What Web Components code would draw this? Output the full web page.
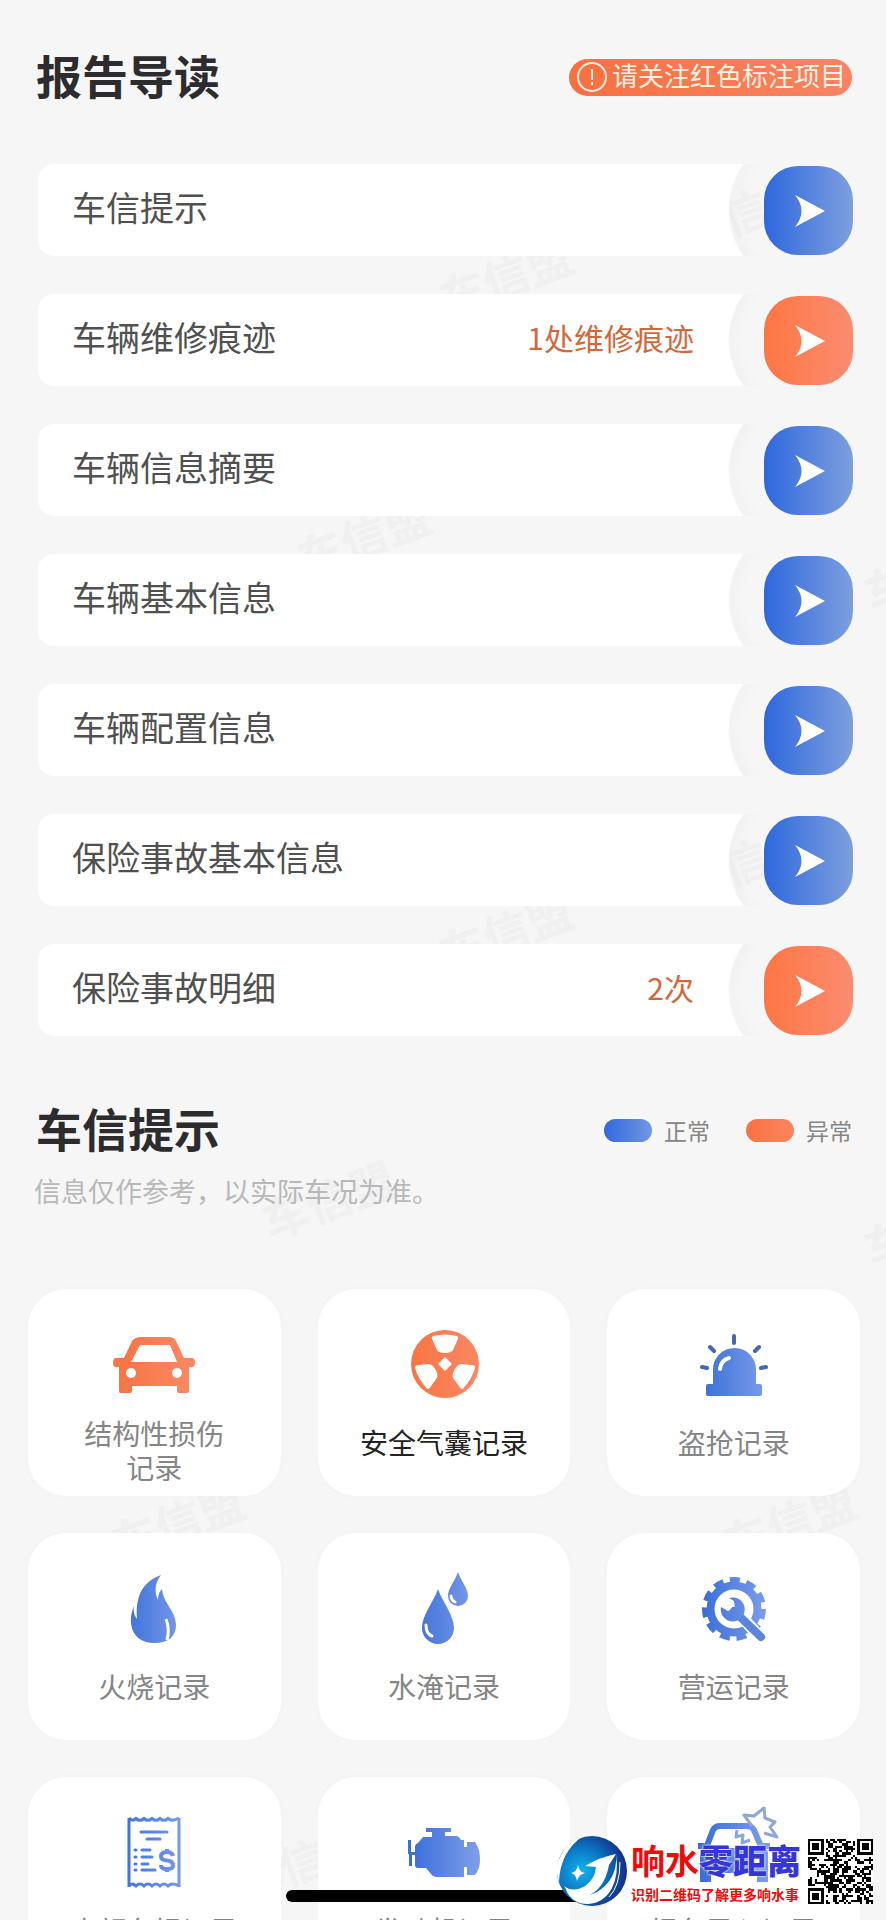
<!DOCTYPE html>
<html lang="zh-CN">
<head>
<meta charset="utf-8">
<meta name="viewport" content="width=device-width, initial-scale=1">
<title>报告导读</title>
<style>
  body {
    margin: 0;
    background: #f6f6f7;
    font-family: "Noto Sans CJK SC", sans-serif;
    color: #444;
  }
</style>
</head>
<body>
<report-page>
  <section-head>
    报告导读
    <notice-badge slot="side">请关注红色标注项目</notice-badge>
  </section-head>

  <guide-list>
    <guide-row>车信提示</guide-row>
    <guide-row alert note="1处维修痕迹">车辆维修痕迹</guide-row>
    <guide-row>车辆信息摘要</guide-row>
    <guide-row>车辆基本信息</guide-row>
    <guide-row>车辆配置信息</guide-row>
    <guide-row>保险事故基本信息</guide-row>
    <guide-row alert note="2次">保险事故明细</guide-row>
  </guide-list>

  <section-head class="second">
    车信提示
    <status-legend slot="side"></status-legend>
    <span slot="hint">信息仅作参考，以实际车况为准。</span>
  </section-head>

  <record-grid>
    <record-card icon="car" alert two-line>结构性损伤<br>记录</record-card>
    <record-card icon="airbag" alert current>安全气囊记录</record-card>
    <record-card icon="siren">盗抢记录</record-card>
    <record-card icon="fire">火烧记录</record-card>
    <record-card icon="water">水淹记录</record-card>
    <record-card icon="gear">营运记录</record-card>
    <record-card icon="bill">大额车损记录</record-card>
    <record-card icon="engine">发动机记录</record-card>
    <record-card icon="crash">报备录入记录</record-card>
  </record-grid>

  <home-bar slot="overlay"></home-bar>
  <promo-stamp slot="overlay"></promo-stamp>
</report-page>

<script>
const define = (name, html, setup) => {
  const tpl = document.createElement('template');
  tpl.innerHTML = html;
  customElements.define(name, class extends HTMLElement {
    constructor() {
      super();
      this.attachShadow({ mode: 'open' }).appendChild(tpl.content.cloneNode(true));
      this.$ = sel => this.shadowRoot.querySelector(sel);
    }
    connectedCallback() {
      if (setup) setup(this);
    }
  });
};

// icons share an 84x76 box, "url(#g)" is the card's own gradient
const ICONS = {
  car: `
    <path fill-rule="evenodd" d="M29 10H57Q62 10 64 14L72 31H80Q83 31 83 35.500T80 40H77V64Q77 66 75 66H67Q65 66 65 64V59H20V64Q20 66 18 66H9Q7 66 7 64V40H4Q1 40 1 35.500T4 31H12L20 14Q23 10 29 10ZM28 18L19 35H65L58 18Z"/>
    <circle cx="19" cy="46" r="5" fill="#fff"/><circle cx="65" cy="46" r="5" fill="#fff"/>`,
  airbag: `
    <circle cx="43" cy="37" r="34"/>
    <g fill="#fff" transform="translate(43 37)">
      <path id="b" d="M-12 -28Q0 -31 12 -28Q14 -27 13 -25L8 -14Q6 -11 0 -11T-8 -14L-13 -25Q-14 -27 -12 -28Z"/>
      <use href="#b" transform="rotate(120)"/><use href="#b" transform="rotate(240)"/>
      <path d="M0 -7L7 0L0 7L-7 0Z"/>
    </g>`,
  siren: `
    <path d="M21 57V42A21.500 21 0 0 1 64 42V57H68Q70 57 70 59V67Q70 69 68 69H16Q14 69 14 67V59Q14 57 16 57Z"/>
    <path d="M28 42Q29 33 37 31" fill="none" stroke="#fff" stroke-width="4" stroke-linecap="round"/>
    <path d="M42 9V16M18 20L22 24M67 20L63 24M10 40L15 41M74 40L69 41" fill="none" stroke="#4468b8" stroke-width="4" stroke-linecap="round"/>`,
  fire: `
    <path d="M49 4C33 10 23 22 25 48C22 44 21 40 22 35C15 50 19 72 42 72C57 72 64 65 64 54C64 40 51 32 50 18C47 21 46 24 46 29C42 20 43 12 49 4Z"/>
    <path d="M54 48Q58 58 55 69" fill="none" stroke="#fff" stroke-width="3"/>`,
  water: `
    <path d="M36 18C31 32 20 44 20 57A16 16 0 0 0 52 57C52 44 41 32 36 18Z"/>
    <path d="M56 1C53 10 46 17 46 25A10 10 0 0 0 66 25C66 17 59 10 56 1Z"/>
    <path d="M24 54Q24 63 30 65M49 25Q49 29 53 31" fill="none" stroke="#fff" stroke-width="3" stroke-linecap="round"/>`,
  gear: `
    <g fill="none" stroke="url(#g)">
      <circle cx="42" cy="38" r="23.500" stroke-width="8"/>
      <circle cx="42" cy="38" r="28" stroke-width="8" pathLength="110" stroke-dasharray="6 4"/>
    </g>
    <path d="M46 42L68 66" stroke="#fff" stroke-width="12"/>
    <path d="M42 40L69 66" stroke="#5b85dd" stroke-width="8" stroke-linecap="round"/>
    <path d="M37 27A12 12 0 1 1 29 36L36 40L43 37L42 30Z"/>`,
  bill: `
    <g fill="none" stroke="url(#g)" stroke-width="3">
      <path d="M17 3V72M67 3V72"/>
      <path d="M17 3Q20 7 24 3.500Q28 7 32 3.500Q36 7 40 3.500Q44 7 48 3.500Q52 7 56 3.500Q60 7 67 3M17 71Q20 67 24 71Q28 67 32 71Q36 67 40 71Q44 67 48 71Q52 67 56 71Q60 67 67 71"/>
      <path stroke-linecap="round" d="M29 17H55M35 24H48M23 35h1M30 35H38M23 42h1M30 42H40M23 49h1M30 49H36M23 55h1M30 55H43"/>
      <path stroke-width="4" d="M61 41Q60 37 55 37Q49 37 49 41.500Q49 45 55 45.500Q61 46 61 50.500Q61 54 55 54Q49 54 49 50M55 34V38M55 53V57"/>
    </g>`,
  engine: `
    <path d="M24 13H49V17H43V21H54Q57 21 59 25H62V32H65V27H73Q78 34 78 44T73 60H65V52H62V62H34Q31 62 29 59L24 53H16Q13 53 13 50V40H10V51H7V39H6V25H9V37H13V32Q13 29 16 28L21 22H30V17H24Z"/>`,
  crash: `
    <g fill="none" stroke="url(#g)" stroke-width="6" stroke-linejoin="round">
      <path d="M13 36L21 15Q23 11 28 11H55Q60 11 62 15L71 36M6 31H13M71 31H78"/>
      <path stroke-width="3" stroke="#8ea6d8" d="M60 11L52 0L62 1L72 -7L73 3L83 7L78 12L85 22L72 18M45 15L44 22L51 20L50 28L58 25"/>
    </g>
    <path d="M8 37Q10 33 15 33H69Q74 33 76 37V67H65V58H19V67H8Z"/>
    <circle cx="20" cy="45" r="4" fill="#fff"/><circle cx="64" cy="45" r="4" fill="#fff"/>`
};

define('report-page', `
  <style>
    :host {
      display: block;
      position: relative;
      z-index: 0;
      height: 100vh;
      overflow: hidden;
      box-sizing: border-box;
      padding-top: 49px;
    }
    .mark {
      position: absolute;
      z-index: -1;
      transform: translate(-50%, -50%) rotate(-20deg);
      font-size: 46px;
      font-weight: 700;
      line-height: 46px;
      white-space: nowrap;
      color: #f0f0f1;
    }
  </style>
  <div id="marks" aria-hidden="true"></div>
  <slot></slot>
  <slot name="overlay"></slot>
`, el => {
  // watermark pins: percent across, px down
  const pins = [[84, 210], [57, 275], [41, 535], [105, 570], [84, 860], [57, 930],
    [37, 1198], [105, 1225], [20, 1520], [89, 1520], [34, 1860]];
  el.$('#marks').innerHTML = pins
    .map(([x, y]) => `<span class="mark" style="left:${x}%;top:${y}px">车信盟</span>`).join('');
});

define('section-head', `
  <style>
    :host {
      display: block;
      padding: 0 34px 0 36px;
    }
    :host(.second) {
      padding-top: 66px;
    }
    .line {
      display: flex;
      align-items: center;
      justify-content: space-between;
    }
    h2 {
      margin: 0;
      padding-bottom: 6px;
      font-size: 46px;
      line-height: 50px;
      font-weight: 700;
      color: #2c2c2e;
    }
    ::slotted([slot=hint]) {
      display: block;
      margin: 15px 0 0 -2px;
      font-size: 27px;
      line-height: 36px;
      color: #b8b8b9;
    }
  </style>
  <div class="line">
    <h2><slot></slot></h2>
    <slot name="side"></slot>
  </div>
  <slot name="hint"></slot>
`);

define('notice-badge', `
  <style>
    :host {
      display: flex;
      align-items: center;
      gap: 5px;
      height: 37px;
      padding: 0 6px 0 8px;
      border-radius: 19px;
      background: linear-gradient(90deg, #f9703f, #f98463);
      color: #fff2e4;
      font-size: 26px;
      line-height: 32px;
    }
    span {
      padding-bottom: 4px;
    }
  </style>
  <svg width="30" height="30" viewBox="0 0 30 30" fill="none" stroke="currentColor" stroke-width="2" aria-hidden="true">
    <circle cx="15" cy="15" r="14"/>
    <path d="M15 7V18M15 20V23"/>
  </svg>
  <span><slot></slot></span>
`);

define('status-legend', `
  <style>
    :host {
      display: flex;
      gap: 36px;
      font-size: 23px;
      line-height: 30px;
      color: #858585;
    }
    span {
      display: flex;
      align-items: center;
      gap: 12px;
    }
    i {
      width: 48px;
      height: 23px;
      border-radius: 12px;
      background: linear-gradient(90deg, #3068dc, #7297e4);
    }
    .bad {
      background: linear-gradient(90deg, #fb7240, #fb8460);
    }
  </style>
  <span><i></i>正常</span>
  <span><i class="bad"></i>异常</span>
`);

define('guide-list', `
  <style>
    :host {
      display: flex;
      flex-direction: column;
      gap: 38px;
      padding: 59px 33px 0 38px;
    }
  </style>
  <slot></slot>
`);

define('guide-row', `
  <style>
    :host {
      display: flex;
      align-items: center;
      height: 92px;
      padding-left: 34px;
      border-radius: 16px;
      /* white bar with a round bite around the button */
      background: radial-gradient(circle at calc(100% - 44px) 50%, transparent 62px, rgba(0,0,0,.014) 79px, #fff 81px);
      font-size: 34px;
      line-height: 44px;
      color: #505050;
    }
    .label, .note {
      padding-bottom: 6px;
    }
    .label {
      flex: 1;
    }
    .note {
      margin-right: 70px;
      font-size: 30px;
      color: #d4673a;
    }
    button {
      width: 89px;
      height: 89px;
      padding: 0;
      border: none;
      border-radius: 34px;
      background: linear-gradient(90deg, #2e67de, #7d9fdd);
      cursor: pointer;
    }
    :host([alert]) button {
      background: linear-gradient(90deg, #ff7643, #fa8c70);
    }
    svg {
      display: block;
    }
  </style>
  <span class="label"><slot></slot></span>
  <span class="note"></span>
  <button type="button">
    <svg width="89" height="89" viewBox="0 0 89 89" fill="#fff" aria-hidden="true">
      <path d="M31 29L61 45L31 61Q44 45 31 29Z"/>
    </svg>
  </button>
`, el => {
  el.$('.note').textContent = el.getAttribute('note') || '';
  el.$('button').setAttribute('aria-label', el.textContent.trim());
});

define('record-grid', `
  <style>
    :host {
      display: grid;
      grid-template-columns: repeat(3, 1fr);
      gap: 37px;
      padding: 80px 26px 0 28px;
    }
  </style>
  <slot></slot>
`);

define('record-card', `
  <style>
    :host {
      display: flex;
      flex-direction: column;
      align-items: center;
      box-sizing: border-box;
      height: 207px;
      padding-top: 38px;
      border-radius: 38px;
      background: #fff;
      box-shadow: 0 0 8px rgba(0,0,0,.02);
      font-size: 28px;
      line-height: 34px;
      text-align: center;
      color: #858585;
    }
    :host([current]) {
      color: #222;
    }
    svg {
      flex: none;
      overflow: visible;
      margin-bottom: 22px;
    }
    :host([two-line]) svg {
      margin-bottom: 13px;
    }
  </style>
  <svg width="84" height="76" viewBox="0 0 84 76" aria-hidden="true"></svg>
  <div><slot></slot></div>
`, el => {
  const [from, to] = el.hasAttribute('alert') ? ['#f87545', '#fa8762'] : ['#3a6fd8', '#7b9cea'];
  el.$('svg').innerHTML = `
    <defs><linearGradient id="g" gradientUnits="userSpaceOnUse" x1="10" y1="0" x2="74" y2="0">
      <stop offset="0" stop-color="${from}"/><stop offset="1" stop-color="${to}"/>
    </linearGradient></defs>
    <g fill="url(#g)">${ICONS[el.getAttribute('icon')]}</g>`;
});

define('home-bar', `
  <style>
    :host {
      position: absolute;
      left: 50%;
      bottom: 18px;
      width: 314px;
      height: 12px;
      margin-left: -157px;
      border-radius: 6px;
      background: #000;
    }
  </style>
`);

define('promo-stamp', `
  <style>
    :host {
      position: absolute;
      right: 13px;
      bottom: 13px;
      display: flex;
      align-items: center;
      gap: 4px;
      font-weight: 700;
      white-space: nowrap;
      color: #f00a0a;
    }
    .text {
      width: 173px;
      text-shadow: 0 0 2px #fff, 0 0 2px #fff;
    }
    .name {
      font-size: 34px;
      line-height: 40px;
      padding-bottom: 4px;
    }
    .name b {
      color: #3636d8;
    }
    .tip {
      font-size: 14px;
      line-height: 20px;
    }
  </style>
  <svg width="71" height="71" viewBox="0 0 71 71" aria-hidden="true">
    <defs><radialGradient id="o" cx=".35" cy=".5" r=".65">
      <stop offset="0" stop-color="#10b4f0"/><stop offset=".5" stop-color="#0a78c4"/><stop offset="1" stop-color="#132c86"/>
    </radialGradient></defs>
    <circle cx="36" cy="35" r="35" fill="url(#o)"/>
    <g fill="#fff">
      <path d="M27 0Q5 8 0 34L3 46Q4 16 27 0Z"/>
      <path d="M60 18Q62 43 41 56Q24 65 10 54Q16 68 32 68Q48 67 56 52Q63 38 60 18Z"/>
      <path d="M60 18Q44 21 29 30L40 31Q39 43 29 50Q17 57 8 50Q14 63 29 61Q48 55 53 29Z"/>
      <path d="M22 29Q23 36 29 37Q23 38 21 45Q20 38 15 37Q21 36 22 29Z"/>
    </g>
    <path d="M53 61Q64 50 64 26" fill="none" stroke="#fff" stroke-width="1"/>
  </svg>
  <div class="text">
    <div class="name">响水<b>零距离</b></div>
    <div class="tip">识别二维码了解更多响水事</div>
  </div>
  <svg id="qr" width="65" height="65" viewBox="0 0 29 29" shape-rendering="crispEdges" role="img" aria-label="二维码"></svg>
`, el => {
  const finder = (x, y) => x < 8 && y < 8 || x > 20 && y < 8 || x < 8 && y > 20;
  let d = '';
  let seed = 7;
  for (let y = 0; y < 29; y++) {
    for (let x = 0; x < 29; x++) {
      seed = (seed * 1103515245 + 12345) % 2147483648;
      if (!finder(x, y) && seed / 2147483648 < 0.52) d += `M${x} ${y}h1v1h-1z`;
    }
  }
  // finder squares: ring with the inner square wound the other way, then the core
  for (const [x, y] of [[0, 0], [22, 0], [0, 22]]) {
    d += `M${x} ${y}h7v7h-7zm1 1v5h5v-5zm1 1h3v3h-3z`;
  }
  el.$('#qr').innerHTML = `<path fill="#fff" d="M0 0h29v29H0z"/><path d="${d}"/>`;
});
</script>
</body>
</html>
